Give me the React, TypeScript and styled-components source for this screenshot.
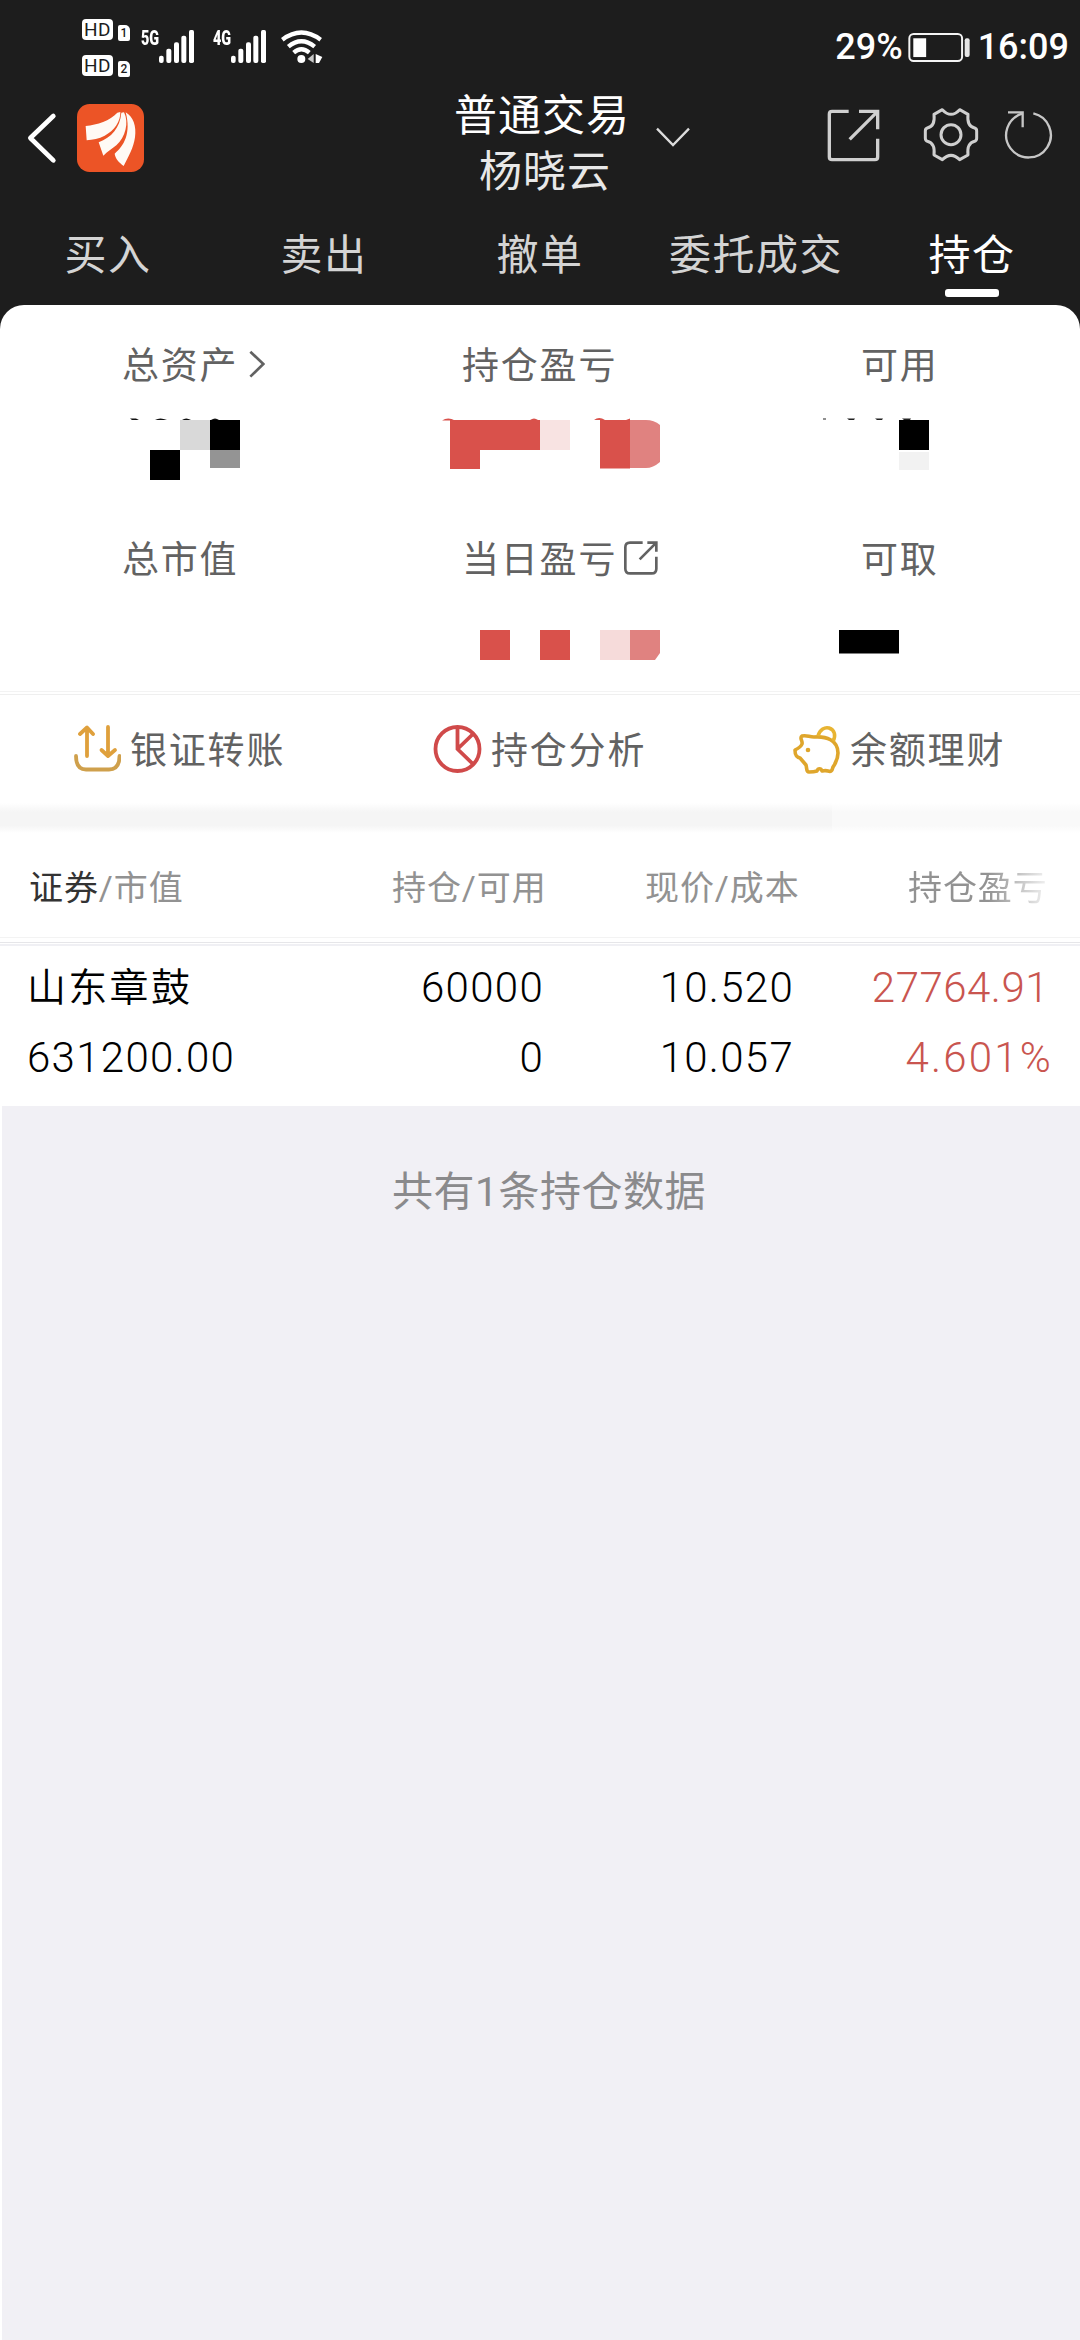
import React from "react";
import styled, { createGlobalStyle } from "styled-components";

const Global = createGlobalStyle`
  * { box-sizing: border-box; }
  html, body { margin: 0; padding: 0; background: #ffffff; }
  body { width: 1080px; font-family: Roboto, "Noto Sans CJK SC", sans-serif; }
  svg { display: block; flex: none; }
`;

const Screen = styled.main`
  width: 1080px;
  height: 2340px;
  display: flex;
  flex-direction: column;
  overflow: hidden;
  background: #ffffff;
`;

const Dark = styled.header`
  background: #1d1d1d;
  color: #ffffff;
`;

const StatusBar = styled.div`
  height: 92px;
  padding: 0 11px 0 82px;
  display: flex;
  justify-content: space-between;
`;

const StatusGroup = styled.div`
  display: flex;
  align-items: flex-start;
`;

const HdStack = styled.div`
  display: grid;
  gap: 15px;
  padding-top: 19px;
`;

const HdRow = styled.div`
  display: flex;
  gap: 5px;
  height: 21px;
`;

const HdBadge = styled.span`
  width: 31px;
  height: 21px;
  border-radius: 4px;
  background: #ffffff;
  color: #1d1d1d;
  font-size: 19px;
  line-height: 22px;
  letter-spacing: 0.5px;
  text-align: center;
`;

const SimBadge = styled.span`
  width: 12px;
  height: 16px;
  margin-top: 6px;
  border-radius: 2px 5px 2px 2px;
  background: #ffffff;
  color: #1d1d1d;
  font-size: 12px;
  font-weight: 500;
  line-height: 17px;
  text-align: center;
`;

const Network = styled.div<{ $gap: number }>`
  display: flex;
  margin: 30px 0 0 ${(p) => p.$gap}px;
`;

const NetLabel = styled.span`
  width: 18px;
  font-size: 20px;
  font-weight: 900;
  line-height: 16px;
  height: 16px;
  white-space: nowrap;
  transform: scaleX(0.72);
  transform-origin: left center;
`;

const WifiBox = styled.div`
  margin: 30px 0 0 15px;
`;

const StatusText = styled.span`
  font-size: 36px;
  font-weight: 500;
  line-height: 44px;
  margin-top: 25px;
`;

const BatteryBox = styled.div`
  margin: 33px 7px 0 5px;
`;

const TitleBar = styled.div`
  height: 108px;
  display: grid;
  grid-template-columns: 454px 1fr 253px;
`;

const TitleLeft = styled.div`
  display: flex;
  align-items: flex-start;
  gap: 20px;
  padding: 12px 0 0 27px;
`;

const BackBox = styled.div`
  padding-top: 8px;
`;

const TitleCenter = styled.div`
  display: flex;
  gap: 26px;
`;

const Title = styled.div`
  width: 176px;
  margin-top: -4px;
  font-size: 43px;
  letter-spacing: 1px;
  line-height: 56px;
  text-align: center;
`;

const Account = styled.div`
  color: #e8e8e8;
  padding-left: 6px;
`;

const ChevronBox = styled.div`
  padding-top: 35px;
`;

const TitleActions = styled.div`
  display: flex;
  align-items: flex-start;
  padding-top: 15px;
`;

const ShareSlot = styled.div`
  padding: 2px 42px 0 0;
`;

const GearSlot = styled.div`
  padding-right: 25px;
`;

const RefreshSlot = styled.div`
  padding-top: 3px;
`;

const Tabs = styled.nav`
  height: 105px;
  display: grid;
  grid-template-columns: repeat(5, 216px);
`;

const Tab = styled.div<{ $active?: boolean }>`
  display: flex;
  flex-direction: column;
  align-items: center;
  padding-top: 25px;
  font-size: 42px;
  letter-spacing: 1.5px;
  line-height: 62px;
  color: ${(p) => (p.$active ? "#ffffff" : "#d4d4d4")};
  &::after {
    content: "";
    width: 54px;
    height: 8px;
    margin-top: 2px;
    border-radius: 3px;
    background: ${(p) => (p.$active ? "#ffffff" : "transparent")};
  }
`;

const CardBack = styled.div`
  background: #1d1d1d;
`;

const Summary = styled.section`
  height: 386px;
  padding-top: 31px;
  background: #ffffff;
  border-radius: 24px 24px 0 0;
  display: grid;
  grid-template-columns: 340px 399px 1fr;
  grid-template-rows: 194px 1fr;
  padding-left: 122px;
`;

const Metric = styled.div`
  display: flex;
  flex-direction: column;
`;

const MetricLabel = styled.div`
  display: flex;
  align-items: center;
  height: 54px;
  font-size: 37px;
  letter-spacing: 1.8px;
  color: #626262;
`;

const LabelIcon = styled.span<{ $gap: number }>`
  margin-left: ${(p) => p.$gap}px;
  padding-top: 2px;
`;

const Mosaic = styled.div<{ $top: number; $shift: number }>`
  margin: ${(p) => p.$top}px 0 0 ${(p) => p.$shift}px;
`;

const Shortcuts = styled.section`
  height: 112px;
  border-top: 1px solid #f3f3f3;
  display: grid;
  grid-template-columns: 360px 360px 1fr;
  grid-template-rows: 3px 1fr;
`;

const ShortcutRule = styled.div`
  grid-column: 1 / -1;
  height: 1px;
  margin-top: 2px;
  background: #efefef;
`;

const Shortcut = styled.div`
  display: flex;
  align-items: flex-start;
  gap: 9px;
  padding: 30px 0 0 73px;
`;

const ShortcutText = styled.span`
  font-size: 37px;
  letter-spacing: 1.8px;
  line-height: 54px;
  color: #626262;
`;

const Band = styled.div`
  height: 30px;
  display: grid;
  grid-template-columns: 832px 1fr;
`;

const BandPart = styled.div<{ $tone: string }>`
  background: linear-gradient(#ffffff, ${(p) => p.$tone} 30%, ${(p) => p.$tone} 75%, #ffffff);
`;

const TableHead = styled.div`
  height: 104px;
  display: grid;
  grid-template-columns: 29px 363px 253px 263px 1fr;
  align-items: center;
  font-size: 34px;
  letter-spacing: 0.9px;
  color: #929292;
`;

const Strong = styled.span`
  color: #333333;
`;

const Fading = styled.span`
  background: linear-gradient(90deg, #929292 0, #929292 80px, #f6f6f6 142px);
  background-clip: text;
  -webkit-background-clip: text;
  color: transparent;
`;

const Rules = styled.div`
  height: 9px;
  flex: none;
  background: linear-gradient(
    #f3f3f3 0 1px,
    #ffffff 1px 5px,
    #e6e6e9 5px 6px,
    #ffffff 6px 7px,
    #f0f0f4 7px 9px
  );
`;

const Holding = styled.section`
  height: 160px;
  padding-top: 6px;
  display: grid;
  grid-template-columns: 544px 250px 1fr;
  grid-template-rows: 70px 70px;
  color: #000000;
`;

const HoldingFirst = styled.div`
  display: flex;
  justify-content: space-between;
  padding-left: 27px;
`;

const StockName = styled.span`
  font-size: 39px;
  font-weight: 350;
  letter-spacing: 2.3px;
  line-height: 72px;
`;

const Num = styled.span<{ $red?: boolean; $right?: number; $track?: number }>`
  font-size: 42px;
  font-weight: 350;
  letter-spacing: ${(p) => p.$track ?? 1.3}px;
  line-height: 72px;
  text-align: right;
  padding-right: ${(p) => p.$right ?? 0}px;
  color: ${(p) => (p.$red ? "#c9554f" : "inherit")};
`;

const Rest = styled.section`
  flex: 1;
  margin-left: 2px;
  padding: 55px 0 0 390px;
  background: #f1f0f5;
  color: #8a8a8c;
  font-size: 41px;
  letter-spacing: 0.5px;
  line-height: 62px;
`;

const Bars = () => (
  <svg width="35" height="33" viewBox="0 0 105 99" fill="#fff">
    <rect x="0" y="77" width="14" height="22" rx="6" />
    <rect x="22" y="56" width="15" height="43" rx="6" />
    <rect x="45" y="37" width="15" height="62" rx="6" />
    <rect x="67" y="17" width="15" height="82" rx="6" />
    <rect x="90" y="0" width="15" height="99" rx="5" />
  </svg>
);

const Wifi = () => (
  <svg width="42" height="33" viewBox="842 90 126 99" fill="none" stroke="#fff" strokeWidth="13">
    <path d="M846 119 Q903 76 961 119" />
    <path d="M864 140 Q903 108 943 140" />
    <path d="M880 158 Q903 138 927 158" />
    <circle cx="903" cy="177" r="12" fill="#fff" stroke="none" />
    <path d="M922 177 L940 162 V189Z" fill="#c8c8c8" stroke="none" />
    <path d="M946 162 L966 171 L956 189 H946Z" fill="#fff" stroke="none" />
  </svg>
);

const Battery = () => (
  <svg width="63" height="29" viewBox="384 98 189 88">
    <rect x="387" y="101" width="160" height="82" rx="13" fill="none" stroke="#f4f4f4" strokeWidth="6" />
    <rect x="399" y="114" width="39" height="57" fill="#fff" />
    <rect x="555" y="114" width="15" height="57" rx="6" fill="#e6e6e6" />
  </svg>
);

const Back = () => (
  <svg width="30" height="52" viewBox="81 334 90 156" fill="none" stroke="#fff" strokeWidth="14" strokeLinecap="round" strokeLinejoin="round">
    <path d="M160 346 L91 412 L160 479" />
  </svg>
);

const Logo = () => (
  <svg width="67" height="68" viewBox="231 312 201 204" fill="#fffaf5">
    <rect x="231" y="312" width="201" height="204" rx="38" fill="#ec5426" />
    <path d="M257 378 C292 374 330 362 352 338 L361 336 C362 364 343 392 314 407 C297 416 278 419 260 421 Z" />
    <path d="M296 427 C334 412 360 384 364 338 L372 337 C388 368 376 412 349 436 C336 447 322 454 310 467 Z" />
    <path d="M377 337 C400 350 410 380 405 412 C401 443 385 470 371 498 C357 487 346 476 344 461 C372 438 394 400 377 337 Z" />
  </svg>
);

const ChevronDown = () => (
  <svg width="34" height="20" viewBox="766 201 102 60" fill="none" stroke="#dcdcdc" strokeWidth="7">
    <path d="M769 206 L817 255 L865 206" />
  </svg>
);

const OpenOut = () => (
  <svg width="54" height="54" viewBox="140 328 162 162" fill="none" stroke="#cfcfcf" strokeWidth="10">
    <path d="M205 335 H155 Q147 335 147 343 V472 Q147 480 155 480 H284 Q292 480 292 472 V417" />
    <path d="M236 335 H292 V389 M292 335 L208 419" />
  </svg>
);

const Gear = () => (
  <svg width="56" height="56" viewBox="430 322 168 168" fill="none" stroke="#cfcfcf" strokeWidth="9" strokeLinejoin="round">
    <path d="M488 330 Q514 358 540 330 L565 344 C562 370 572 382 585 385 Q591 387 591 394 V416 Q591 423 585 425 C572 428 562 440 565 466 L540 480 Q514 454 488 480 L463 466 C466 440 456 428 443 425 Q437 423 437 416 V394 Q437 387 443 385 C456 382 466 370 463 344 Z" />
    <circle cx="514" cy="405" r="30" />
  </svg>
);

const Refresh = () => (
  <svg width="50" height="50" viewBox="672 330 150 150" fill="none" stroke="#c6c6c6" strokeWidth="7">
    <path d="M760 340 A67 67 0 1 1 727 341" />
    <path d="M684 337 H728 V382" />
  </svg>
);

const ChevronRight = () => (
  <svg width="16" height="28" viewBox="510 60 48 84" fill="none" stroke="#626262" strokeWidth="8">
    <path d="M514 65 L553 102 L514 140" />
  </svg>
);

const SmallOpen = () => (
  <svg width="34" height="34" viewBox="612 633 102 102" fill="none" stroke="#626262" strokeWidth="8">
    <path d="M668 638 H630 Q616 638 616 652 V716 Q616 730 630 730 H695 Q709 730 709 716 V680" />
    <path d="M682 638 H709 V665 M709 638 L659 688" />
  </svg>
);

const TransferIcon = () => (
  <svg width="48" height="48" viewBox="0 0 48 48" fill="none" stroke="#dfa03c" strokeWidth="3.8" strokeLinecap="round" strokeLinejoin="round">
    <path d="M14 31 V3 M7 9 L14 2.5 L20 9" />
    <path d="M35 2 V31 M28.5 25 L35 31 L42 25" />
    <path d="M3 31 C3 40 6 44.5 13 44.5 H36 C43 44.5 46.5 40 46.5 31" stroke="#cfa04c" />
  </svg>
);

const PieIcon = () => (
  <svg width="49" height="49" viewBox="0 0 49 49" fill="none" stroke="#d04a4a" strokeWidth="3.8">
    <circle cx="24.5" cy="24" r="22" />
    <path d="M24.5 3 V24 L40 39 M24.5 24 L40 9" />
  </svg>
);

const PigIcon = () => (
  <svg width="48" height="49" viewBox="0 0 48 49" fill="none" stroke="#dfa62c" strokeWidth="3.6" strokeLinejoin="round">
    <path d="M9 11 C14 10 16 12 21 12 C33 11 45 15 45 28 C45 35 42 39 40 42 C39 46 38 47 35 46 C32 45 31 46 29 46 C28 43 25 43 24 46 C21 47 19 47 16 47 C13 47 14 43 13 40 L7 33 C3 32 2 30 2 25 C4 24 8 22 9 19 C10 16 6 13 9 11 Z" />
    <path d="M25 11 C27 4 32 2 36 3 C42 5 43 11 40 16" stroke="#e8b432" />
    <circle cx="15" cy="25" r="2.3" fill="#dfa62c" stroke="none" />
  </svg>
);

const AssetsMosaic = () => (
  <svg width="120" height="62" viewBox="0 0 120 62">
    <path d="M8 0.500 h6 l3 1.500 h-7 z M33 2 q5 -3 12 0 z M60 2 q4 -3 9 0 z M89 2 q4 -3 8 0 z" fill="#111" />
    <rect x="58" y="2" width="30" height="30" fill="#d9d9d9" />
    <rect x="88" y="2" width="30" height="30" fill="#000" />
    <rect x="88" y="32" width="30" height="18" fill="#949494" />
    <rect x="28" y="32" width="30" height="30" fill="#000" />
  </svg>
);

const ProfitMosaic = () => (
  <svg width="220" height="52" viewBox="0 0 220 52">
    <path d="M0 2.5 q6 -4 13 0 z M88 2 q4 -3 8 0 z M152 2 q5 -4 11 0 z M184 2 l4 -1.500 v1.500 z" fill="#d9514b" />
    <path d="M8 2 H98 V32 H38 V51 H8 Z" fill="#d9514b" />
    <rect x="98" y="2" width="30" height="30" fill="#f8e3e2" />
    <rect x="158" y="2" width="30" height="48.500" fill="#d9514b" />
    <path d="M188 2 H204 Q212 2 218 7 V44 Q211 50 204 50 H188 Z" fill="#e08280" />
  </svg>
);

const AvailableMosaic = () => (
  <svg width="110" height="54" viewBox="0 0 110 54">
    <path d="M2 0.500 h3 v1 h-3 z M26 0.500 h8 l-1 1.500 h-5 z M54 0.500 h8 l-1 1.500 h-5 z M81 0.500 h9 l-1 1.500 h-6 z" fill="#222" />
    <rect x="78" y="2" width="30" height="30" fill="#000" />
    <rect x="78" y="34" width="30" height="18" fill="#f2f2f2" />
  </svg>
);

const DayMosaic = () => (
  <svg width="180" height="30" viewBox="0 0 180 30">
    <rect width="30" height="30" fill="#d9514b" />
    <rect x="60" width="30" height="30" fill="#d9514b" />
    <rect x="120" width="30" height="30" fill="#f6dbda" />
    <path d="M150 0 H180 V23 L175 30 H150 Z" fill="#e08280" />
  </svg>
);

const WithdrawMosaic = () => (
  <svg width="60" height="24" viewBox="0 0 60 24">
    <rect width="60" height="23.500" fill="#000" />
  </svg>
);

export default function App() {
  return (
    <>
      <Global />
      <Screen>
        <Dark>
          <StatusBar>
            <StatusGroup>
              <HdStack>
                <HdRow><HdBadge>HD</HdBadge><SimBadge>1</SimBadge></HdRow>
                <HdRow><HdBadge>HD</HdBadge><SimBadge>2</SimBadge></HdRow>
              </HdStack>
              <Network $gap={11}><NetLabel>5G</NetLabel><Bars /></Network>
              <Network $gap={19}><NetLabel>4G</NetLabel><Bars /></Network>
              <WifiBox><Wifi /></WifiBox>
            </StatusGroup>
            <StatusGroup>
              <StatusText>29%</StatusText>
              <BatteryBox><Battery /></BatteryBox>
              <StatusText>16:09</StatusText>
            </StatusGroup>
          </StatusBar>
          <TitleBar>
            <TitleLeft>
              <BackBox><Back /></BackBox>
              <Logo />
            </TitleLeft>
            <TitleCenter>
              <Title>
                <div>普通交易</div>
                <Account>杨晓云</Account>
              </Title>
              <ChevronBox><ChevronDown /></ChevronBox>
            </TitleCenter>
            <TitleActions>
              <ShareSlot><OpenOut /></ShareSlot>
              <GearSlot><Gear /></GearSlot>
              <RefreshSlot><Refresh /></RefreshSlot>
            </TitleActions>
          </TitleBar>
          <Tabs>
            <Tab>买入</Tab>
            <Tab>卖出</Tab>
            <Tab>撤单</Tab>
            <Tab>委托成交</Tab>
            <Tab $active>持仓</Tab>
          </Tabs>
        </Dark>
        <CardBack>
          <Summary>
            <Metric>
              <MetricLabel>总资产<LabelIcon $gap={11}><ChevronRight /></LabelIcon></MetricLabel>
              <Mosaic $top={28} $shift={0}><AssetsMosaic /></Mosaic>
            </Metric>
            <Metric>
              <MetricLabel>持仓盈亏</MetricLabel>
              <Mosaic $top={28} $shift={-20}><ProfitMosaic /></Mosaic>
            </Metric>
            <Metric>
              <MetricLabel>可用</MetricLabel>
              <Mosaic $top={28} $shift={-40}><AvailableMosaic /></Mosaic>
            </Metric>
            <Metric>
              <MetricLabel>总市值</MetricLabel>
            </Metric>
            <Metric>
              <MetricLabel>当日盈亏<LabelIcon $gap={7}><SmallOpen /></LabelIcon></MetricLabel>
              <Mosaic $top={46} $shift={18}><DayMosaic /></Mosaic>
            </Metric>
            <Metric>
              <MetricLabel>可取</MetricLabel>
              <Mosaic $top={46} $shift={-22}><WithdrawMosaic /></Mosaic>
            </Metric>
          </Summary>
        </CardBack>
        <Shortcuts>
          <ShortcutRule />
          <Shortcut><TransferIcon /><ShortcutText>银证转账</ShortcutText></Shortcut>
          <Shortcut><PieIcon /><ShortcutText>持仓分析</ShortcutText></Shortcut>
          <Shortcut><PigIcon /><ShortcutText>余额理财</ShortcutText></Shortcut>
        </Shortcuts>
        <Band>
          <BandPart $tone="#f5f5f5" />
          <BandPart $tone="#f9f9f9" />
        </Band>
        <TableHead>
          <span />
          <span><Strong>证券</Strong>/市值</span>
          <span>持仓/可用</span>
          <span>现价/成本</span>
          <Fading>持仓盈亏</Fading>
        </TableHead>
        <Rules />
        <Holding>
          <HoldingFirst><StockName>山东章鼓</StockName><Num>60000</Num></HoldingFirst>
          <Num>10.520</Num>
          <Num $red $right={31} $track={0.5}>27764.91</Num>
          <HoldingFirst><Num>631200.00</Num><Num>0</Num></HoldingFirst>
          <Num>10.057</Num>
          <Num $red $right={27} $track={2.2}>4.601%</Num>
        </Holding>
        <Rest>共有1条持仓数据</Rest>
      </Screen>
    </>
  );
}
